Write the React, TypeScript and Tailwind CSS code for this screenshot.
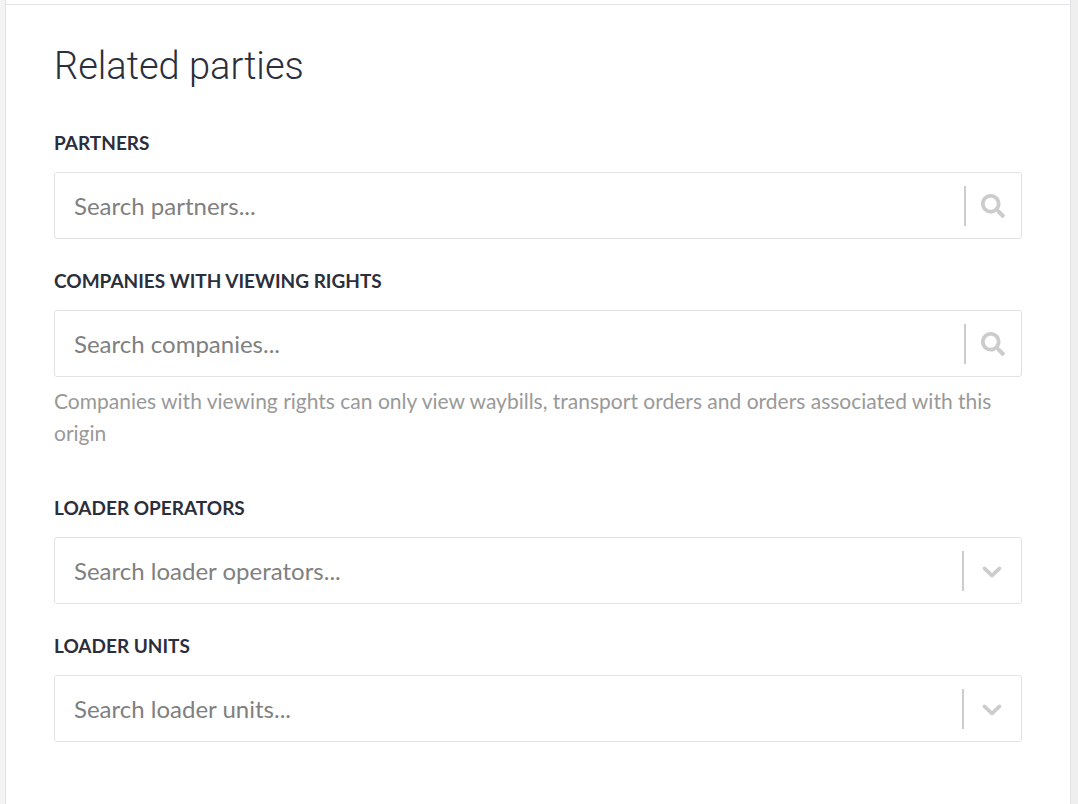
import { FaSearch } from "react-icons/fa";

interface SearchFieldProps {
    id: string;
    label: string;
    placeholder: string;
    icon: "search" | "chevron";
    hint?: string;
}

function ChevronIcon() {
    return (
        <svg viewBox="0 0 20 20" className="h-8 w-8 fill-current" aria-hidden="true">
            <path d="M4.516 7.548c0.436-0.446 1.043-0.481 1.576 0l3.908 3.747 3.908-3.747c0.533-0.481 1.141-0.446 1.574 0 0.436 0.445 0.408 1.197 0 1.615-0.406 0.418-4.695 4.502-4.695 4.502-0.217 0.223-0.502 0.335-0.787 0.335s-0.57-0.112-0.789-0.335c0 0-4.287-4.084-4.695-4.502s-0.436-1.17 0-1.615z" />
        </svg>
    );
}

function SearchField({ id, label, placeholder, icon, hint }: SearchFieldProps) {
    return (
        <div>
            <label htmlFor={id} className="block text-[19px] leading-6 font-bold uppercase text-[#2b2f3b]">
                {label}
            </label>
            <div className="mt-[17px] flex h-[67px] items-center rounded-[3px] border border-[#e2e2e2] bg-white">
                <input
                    id={id}
                    type="text"
                    placeholder={placeholder}
                    className="min-w-0 flex-1 self-stretch bg-transparent pl-[19px] text-2xl text-[#2b2f3b] outline-none placeholder:text-[#808080]"
                />
                <span className="h-10 w-0.5 bg-[#cccccc]" />
                <button
                    type="button"
                    aria-label={`Open ${label}`}
                    className={
                        icon === "search"
                            ? "flex w-[55px] justify-center pr-0.5 text-[#cccccc]"
                            : "flex w-[57px] justify-center pr-0.5 text-[#cccccc]"
                    }
                >
                    {icon === "search" ? <FaSearch className="h-6 w-6" /> : <ChevronIcon />}
                </button>
            </div>
            {hint && <p className="mt-2 text-[21px] leading-8 text-[#999999]">{hint}</p>}
        </div>
    );
}

export default function App() {
    return (
        <main className="min-h-screen border-l-[5px] border-[#f4f4f4] bg-[#efefef] pr-[7px] font-['Lato',sans-serif]">
            <div className="min-h-screen border-x border-[#e0e2e5] bg-white">
                <div className="h-[5px] border-b border-[#dfe3e8]" />
                <section className="px-12 pt-9 pb-12">
                    <h1 className="font-['Roboto',sans-serif] text-[38px] leading-[50px] font-light text-[#2b2f3b]">Related parties</h1>
                    <div className="mt-10 space-y-[30px]">
                        <SearchField id="partners" label="Partners" placeholder="Search partners..." icon="search" />
                        <SearchField
                            id="companies"
                            label="Companies with viewing rights"
                            placeholder="Search companies..."
                            icon="search"
                            hint="Companies with viewing rights can only view waybills, transport orders and orders associated with this origin"
                        />
                    </div>
                    <div className="mt-[47px] space-y-[30px]">
                        <SearchField id="operators" label="Loader operators" placeholder="Search loader operators..." icon="chevron" />
                        <SearchField id="units" label="Loader units" placeholder="Search loader units..." icon="chevron" />
                    </div>
                </section>
            </div>
        </main>
    );
}
